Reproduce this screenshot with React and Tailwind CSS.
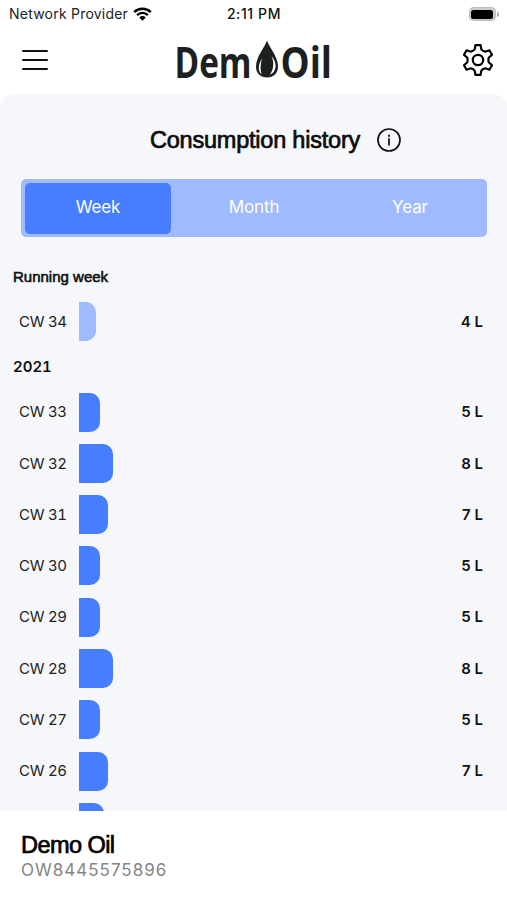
import { useState } from "react";

const periods = ["Week", "Month", "Year"];

const runningWeek = { week: 34, litres: 4, width: "w-[17px]" };

const history = [
  { week: 33, litres: 5, width: "w-[21px]" },
  { week: 32, litres: 8, width: "w-[33.5px]" },
  { week: 31, litres: 7, width: "w-[29px]" },
  { week: 30, litres: 5, width: "w-[21px]" },
  { week: 29, litres: 5, width: "w-[21px]" },
  { week: 28, litres: 8, width: "w-[33.5px]" },
  { week: 27, litres: 5, width: "w-[21px]" },
  { week: 26, litres: 7, width: "w-[29px]" },
  { week: 25, litres: 6, width: "w-[25px]" },
];

function StatusBar() {
  return (
    <div className="grid h-7 grid-cols-3 items-center pl-[9px] pr-[8px] text-[14px] leading-none">
      <div className="flex items-center gap-[5px] whitespace-nowrap tracking-[0.22px] text-[#222]">
        Network Provider
        <svg width="19" height="14" viewBox="0 0 19 14" fill="none">
          <path d="M1.2 5.1a11.9 11.9 0 0 1 16.6 0" stroke="#000" strokeWidth="2.5" />
          <path d="M4.1 8.1a7.7 7.7 0 0 1 10.8 0" stroke="#000" strokeWidth="2.3" />
          <path d="M6.3 10.4a4.6 4.6 0 0 1 6.4 0L9.5 13.7z" fill="#000" />
        </svg>
      </div>
      <div className="text-center text-[14px] font-medium tracking-[0.6px] text-[#111]">
        2:11 PM
      </div>
      <div className="flex items-center justify-end">
        <div className="h-[14px] w-[27px] rounded-[4.5px] border border-[#bbb] bg-[#ccc] p-[1.5px]">
          <div className="h-full w-full rounded-[2.5px] bg-black" />
        </div>
        <div className="ml-px h-[5px] w-[2px] rounded-r-full bg-[#aaa]" />
      </div>
    </div>
  );
}

function Logo() {
  return (
    <svg width="162" height="60" viewBox="0 0 162 60" fill="#1d2020" className="overflow-visible">
      <text
        x="-0.5"
        y="39"
        fontSize="43.5"
        fontWeight="700"
        textLength="77"
        lengthAdjust="spacingAndGlyphs"
        className="font-['Open_Sans',sans-serif]"
      >
        Dem
      </text>
      <path d="M92 1.500C90 8 81 17.500 81 27.500C81 34.500 85.500 38.500 92 38.500S103 34.500 103 27.500C103 17.500 94 8 92 1.500Z" />
      <path
        d="M87 19.500C83.500 25 82.300 31 86.500 35.600C85 30.500 85.500 25 87 19.500ZM96.500 17C99.500 24 98.500 30 95 35.800C102.500 32 102 23.500 96.500 17Z"
        fill="#fff"
      />
      <text
        x="105.5"
        y="39"
        fontSize="43.5"
        fontWeight="700"
        textLength="51.5"
        lengthAdjust="spacingAndGlyphs"
        className="font-['Open_Sans',sans-serif]"
      >
        Oil
      </text>
    </svg>
  );
}

function GearIcon() {
  return (
    <svg
      width="34"
      height="34"
      viewBox="0 0 34 34"
      fill="none"
      stroke="#000"
      strokeWidth="2.2"
      strokeLinejoin="round"
    >
      <path d="M14.400 2.200h5.200l.8 4.400Q22 8.300 24.200 8.700l4.200-1.400 2.600 4.500-3.300 3Q27 17 27.700 19.200l3.300 3-2.600 4.500-4.200-1.400Q22 25.700 20.400 27.400l-.8 4.400h-5.200l-.8-4.400Q12 25.700 9.800 25.300l-4.200 1.400L3 22.200l3.300-3Q7 17 6.300 14.800L3 11.800l2.600-4.500 4.200 1.400Q12 8.300 13.600 6.600z" />
      <circle cx="17" cy="17" r="5.200" />
    </svg>
  );
}

function Header() {
  return (
    <div className="flex h-[66px] items-start justify-between pl-[22px] pr-[12px]">
      <button className="mt-[22px] flex w-[26px] flex-col gap-[7px]" aria-label="Menu">
        <span className="h-[2px] w-full rounded-full bg-[#111]" />
        <span className="h-[2px] w-full rounded-full bg-[#111]" />
        <span className="h-[2px] w-full rounded-full bg-[#111]" />
      </button>
      <div className="ml-[2px] mt-[11px]">
        <Logo />
      </div>
      <button className="mt-[15px]" aria-label="Settings">
        <GearIcon />
      </button>
    </div>
  );
}

function WeekRow({ item, color }) {
  return (
    <div className="flex h-[39px] shrink-0 items-center pl-[19px] pr-[24px] text-[15px]">
      <span className="w-[60px] whitespace-nowrap pt-px tabular-nums tracking-[-0.3px] text-[#222]">
        CW {item.week}
      </span>
      <div className={`h-full rounded-r-[10px] ${item.width} ${color}`} />
      <span className="ml-auto pt-px font-semibold text-[#111]">{item.litres} L</span>
    </div>
  );
}

function App() {
  const [period, setPeriod] = useState("Week");

  return (
    <div className="flex h-[900px] w-[507px] flex-col overflow-hidden bg-white font-['Inter',sans-serif]">
      <StatusBar />
      <Header />

      <div className="flex h-[717px] flex-col overflow-hidden rounded-t-[14px] bg-[#f5f7fb]">
        <div className="mt-[30px] flex h-8 shrink-0 items-center pl-[150px]">
          <h1 className="w-[227px] whitespace-nowrap pt-[2px] font-['Liberation_Sans',sans-serif] text-[23.500px] tracking-[-0.22px] text-[#0b0b0b] [-webkit-text-stroke:0.7px_#0b0b0b]">
            Consumption history
          </h1>
          <svg width="24" height="24" viewBox="0 0 24 24" fill="none" stroke="#111">
            <circle cx="12" cy="12" r="11" strokeWidth="1.7" />
            <path d="M12 10.300v7.200" strokeWidth="1.8" />
            <path d="M12 6.700v2" strokeWidth="1.900" />
          </svg>
        </div>

        {/* Period switch */}
        <div className="ml-[21px] mr-5 mt-[23px] grid h-[58px] shrink-0 grid-cols-[146px_1fr_146px] gap-[9px] rounded-[5px] bg-[#9fbaff] px-[4px] pb-[3px] pt-[4px]">
          {periods.map((name) => (
            <button
              key={name}
              onClick={() => setPeriod(name)}
              className={`rounded-[5px] pb-px text-[17px] tracking-[-0.1px] text-white ${
                period === name ? "bg-[#467eff]" : ""
              }`}
            >
              {name}
            </button>
          ))}
        </div>

        <h2 className="mt-[30px] pl-[13px] font-['Liberation_Sans',sans-serif] text-[15px] leading-5 text-[#111] [-webkit-text-stroke:0.6px_#111]">
          Running week
        </h2>
        <div className="mt-[15px] flex flex-col">
          <WeekRow item={runningWeek} color="bg-[#9fbaff]" />
        </div>

        <h2 className="mt-4 pl-[13px] text-[15px] font-semibold tabular-nums leading-5 text-[#111]">
          2021
        </h2>
        <div className="mt-[15.500px] flex flex-col gap-[12.300px]">
          {history.map((item) => (
            <WeekRow key={item.week} item={item} color="bg-[#467eff]" />
          ))}
        </div>
      </div>

      <div className="flex-1 bg-white pl-[21px] pt-[20px]">
        <div className="font-['Liberation_Sans',sans-serif] text-[23.500px] leading-7 tracking-[-0.55px] text-black [-webkit-text-stroke:0.7px_#000]">
          Demo Oil
        </div>
        <div className="text-[17px] leading-[22px] tracking-[1px] text-[#858585]">
          OW8445575896
        </div>
      </div>
    </div>
  );
}

export default App;
